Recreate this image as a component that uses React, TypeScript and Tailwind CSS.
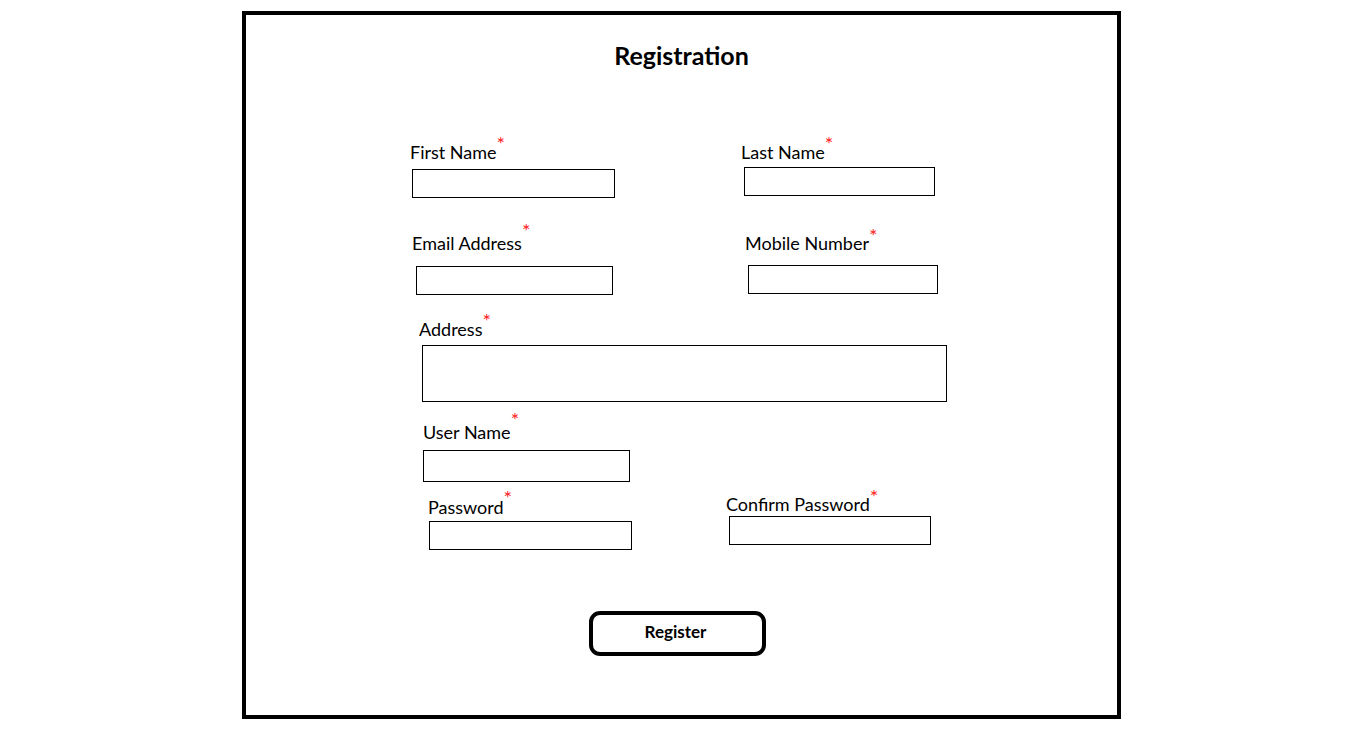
import React from 'react';

interface FieldProps {
    label: string;
    labelClass: string;
    starClass: string;
    boxClass: string;
    multiline?: boolean;
}

function Field({ label, labelClass, starClass, boxClass, multiline }: FieldProps) {
    return (
        <div className="flex flex-col">
            <label className={`h-[22px] text-[18px] leading-[22px] text-black whitespace-nowrap ${labelClass}`}>
                {label}
                <span className={`relative text-[20px] leading-none text-[#ff2020] ${starClass}`}>*</span>
            </label>
            {multiline ? (
                <textarea className={`block border border-black bg-white resize-none outline-none ${boxClass}`} />
            ) : (
                <input type="text" className={`block border border-black bg-white outline-none ${boxClass}`} />
            )}
        </div>
    );
}

export default function App() {
    return (
        <div className="min-h-screen w-full bg-white pt-[11px] font-['Lato',sans-serif]">
            <div className="ml-[242px] w-[879px] h-[708px] border-4 border-black">
                <h1 className="mt-[26px] text-center text-[25px] leading-[28px] font-bold text-black">Registration</h1>

                {/* names */}
                <div className="mt-[72px] flex">
                    <div className="w-[480px] shrink-0">
                        <Field label="First Name" labelClass="ml-[164px]" starClass="-top-[8px]" boxClass="ml-[166px] mt-[6px] w-[203px] h-[29px]" />
                    </div>
                    <div>
                        <Field label="Last Name" labelClass="ml-[15px]" starClass="-top-[8px]" boxClass="ml-[18px] mt-[4px] w-[191px] h-[29px]" />
                    </div>
                </div>

                {/* contact */}
                <div className="mt-[34px] flex">
                    <div className="w-[480px] shrink-0">
                        <Field label="Email Address" labelClass="ml-[166px]" starClass="-top-[12px]" boxClass="ml-[170px] mt-[12px] w-[197px] h-[29px]" />
                    </div>
                    <div>
                        <Field label="Mobile Number" labelClass="ml-[19px]" starClass="-top-[7px]" boxClass="ml-[22px] mt-[11px] w-[190px] h-[29px]" />
                    </div>
                </div>

                <div className="mt-[23px]">
                    <Field label="Address" labelClass="ml-[173px]" starClass="-top-[8px]" boxClass="ml-[176px] mt-[5px] w-[525px] h-[57px]" multiline />
                </div>

                <div className="mt-[19px]">
                    <Field label="User Name" labelClass="ml-[177px]" starClass="-top-[12px]" boxClass="ml-[177px] mt-[7px] w-[207px] h-[32px]" />
                </div>

                {/* passwords */}
                <div className="mt-[11px] flex items-start">
                    <div className="w-[480px] shrink-0 pt-[3px]">
                        <Field label="Password" labelClass="ml-[182px]" starClass="-top-[9px]" boxClass="ml-[183px] mt-[3px] w-[203px] h-[29px]" />
                    </div>
                    <div>
                        <Field label="Confirm Password" labelClass="ml-0" starClass="-top-[7px]" boxClass="ml-[3px] mt-[1px] w-[202px] h-[29px]" />
                    </div>
                </div>

                <button
                    type="button"
                    className="block mt-[61px] ml-[343px] w-[177px] h-[45px] border-4 border-black rounded-[11px] bg-white pr-[4px] pb-[4px] text-[17px] font-bold text-black"
                >
                    Register
                </button>
            </div>
        </div>
    );
}
